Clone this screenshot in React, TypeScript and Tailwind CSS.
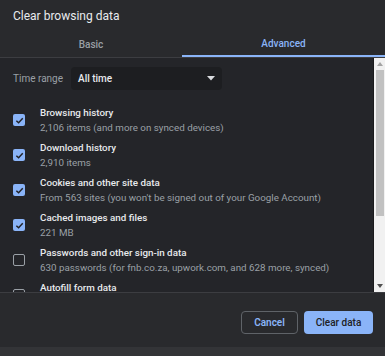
import React from 'react';

type Item = { title: string; sub: string; checked: boolean };

const items: Item[] = [
  { title: 'Browsing history', sub: '2,106 items (and more on synced devices)', checked: true },
  { title: 'Download history', sub: '2,910 items', checked: true },
  { title: 'Cookies and other site data', sub: "From 563 sites (you won't be signed out of your Google Account)", checked: true },
  { title: 'Cached images and files', sub: '221 MB', checked: true },
  { title: 'Passwords and other sign-in data', sub: '630 passwords (for fnb.co.za, upwork.com, and 628 more, synced)', checked: false },
  { title: 'Autofill form data', sub: '', checked: false },
];

const Checkbox: React.FC<{ checked: boolean }> = ({ checked }) =>
  checked ? (
    <div className="w-[12px] h-[12px] rounded-[2px] bg-[#8ab4f8] flex items-center justify-center">
      <svg width="9" height="9" viewBox="0 0 10 10">
        <path d="M1.5 5.2 L4 7.6 L8.6 2.6" fill="none" stroke="#202124" strokeWidth="1.6" />
      </svg>
    </div>
  ) : (
    <div className="w-[12px] h-[12px] rounded-[2px] border-[1.5px] border-[#9aa0a6]" />
  );

const App: React.FC = () => {
  return (
    <div
      className="w-[385px] h-[356px] bg-[#292a2d] flex flex-col overflow-hidden"
      style={{ fontFamily: 'Roboto, "Liberation Sans", sans-serif' }}
    >
      {/* Title */}
      <div className="h-[32px] pl-[13px] flex items-center text-[12px] text-[#e8eaed]">
        Clear browsing data
      </div>

      {/* Tabs */}
      <div className="h-[26px] flex border-b border-[#3c3d41]">
        <div className="w-[182px] flex items-center justify-center text-[10px] font-medium text-[#9aa0a6]">
          Basic
        </div>
        <div className="flex-1 flex items-center justify-center text-[10px] font-medium text-[#8ab4f8] border-b-2 border-[#8ab4f8]">
          Advanced
        </div>
      </div>

      {/* Body */}
      <div className="h-[235px] flex bg-[#242529] border-b border-[#3c3d41]">
        <div className="flex-1 overflow-hidden pl-[13px] pt-[9px]">
          <div className="flex items-center h-[23px]">
            <span className="w-[58px] text-[10px] text-[#9aa0a6]">Time range</span>
            <div className="w-[151px] h-[23px] rounded-[4px] bg-[#1d1e21] flex items-center justify-between pl-[7px] pr-[7px]">
              <span className="text-[10px] font-medium text-[#e8eaed]">All time</span>
              <svg width="8" height="5" viewBox="0 0 8 5">
                <path d="M0 0 L8 0 L4 4.5 Z" fill="#dadce0" />
              </svg>
            </div>
          </div>
          <div className="mt-[15px] flex flex-col">
            {items.map((it) => (
              <div key={it.title} className="h-[35px] flex">
                <div className="w-[27px] pt-[9px]">
                  <Checkbox checked={it.checked} />
                </div>
                <div className="flex flex-col">
                  <span className="h-[15px] leading-[15px] text-[9.8px] font-medium text-[#e8eaed] whitespace-nowrap">
                    {it.title}
                  </span>
                  <span className="h-[15px] leading-[15px] text-[9.8px] text-[#9aa0a6] whitespace-nowrap">
                    {it.sub}
                  </span>
                </div>
              </div>
            ))}
          </div>
        </div>
        {/* Scrollbar */}
        <div className="w-[12px] bg-[#f1f1f1] border-l border-[#1a1a1c] flex flex-col items-center">
          <div className="h-[12px] flex items-center justify-center">
            <svg width="6" height="4" viewBox="0 0 6 4">
              <path d="M0 4 L6 4 L3 0 Z" fill="#a3a3a3" />
            </svg>
          </div>
          <div className="w-[8px] h-[146px] bg-[#c1c1c1]" />
          <div className="flex-1" />
          <div className="h-[12px] flex items-center justify-center">
            <svg width="6" height="4" viewBox="0 0 6 4">
              <path d="M0 0 L6 0 L3 4 Z" fill="#505050" />
            </svg>
          </div>
        </div>
      </div>

      {/* Footer */}
      <div className="flex-1 flex justify-end items-start pt-[18px] pr-[12px] gap-[6px]">
        <button className="w-[57px] h-[23px] rounded-[4px] border border-[#5f6368] text-[10px] font-semibold text-[#8ab4f8]">
          Cancel
        </button>
        <button className="w-[69px] h-[23px] rounded-[4px] bg-[#8ab4f8] text-[10px] font-medium text-[#202124]">
          Clear data
        </button>
      </div>
      <div className="h-[9px] bg-[#333437]" />
    </div>
  );
};

export default App;
